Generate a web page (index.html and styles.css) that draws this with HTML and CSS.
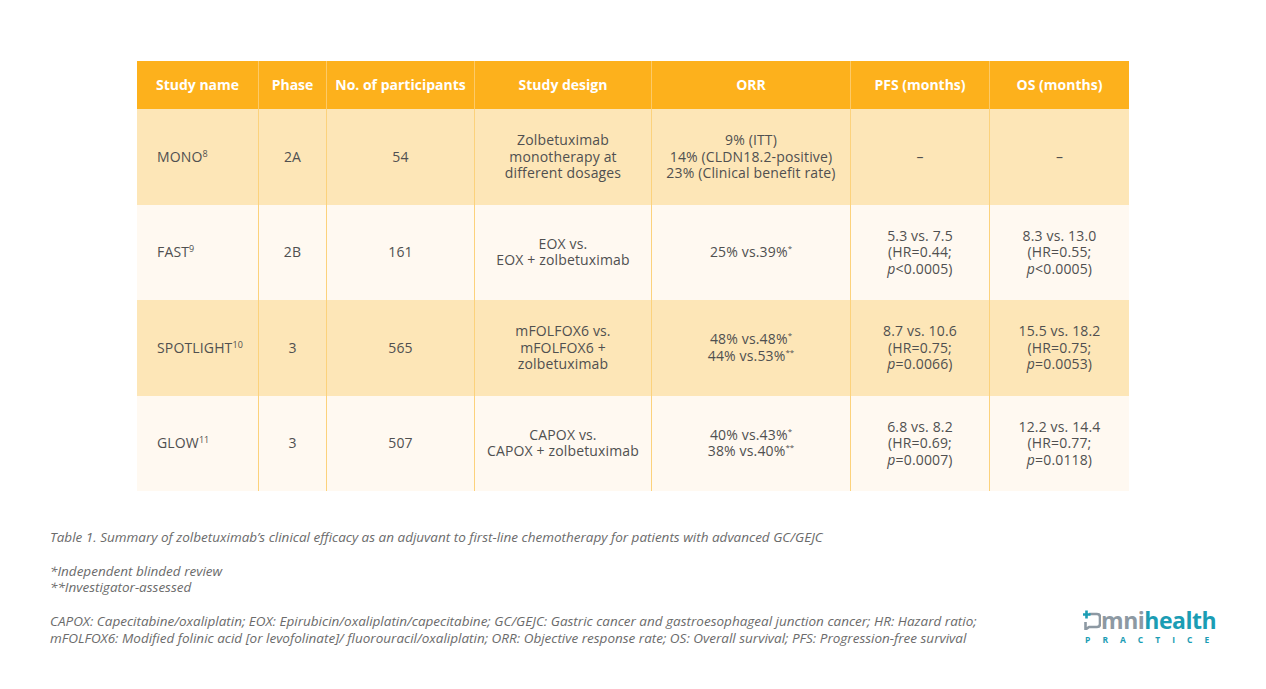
FILE: index.html
```html
<!DOCTYPE html>
<html lang="en">
<head>
<meta charset="utf-8">
<link rel="stylesheet" href="styles.css">
</head>
<body>
<div class="page">
  <table class="trials">
    <thead>
      <tr>
        <th class="c-name">Study name</th>
        <th class="c-phase">Phase</th>
        <th class="c-n">No. of participants</th>
        <th class="c-design">Study design</th>
        <th class="c-orr">ORR</th>
        <th class="c-pfs">PFS (months)</th>
        <th class="c-os">OS (months)</th>
      </tr>
    </thead>
    <tbody>
      <tr class="odd">
        <td class="name">MONO<sup>8</sup></td>
        <td>2A</td>
        <td>54</td>
        <td>Zolbetuximab<br>monotherapy at<br>different dosages</td>
        <td>9% (ITT)<br>14% (CLDN18.2-positive)<br>23% (Clinical benefit rate)</td>
        <td>–</td>
        <td>–</td>
      </tr>
      <tr class="even">
        <td class="name">FAST<sup>9</sup></td>
        <td>2B</td>
        <td>161</td>
        <td>EOX vs.<br>EOX + zolbetuximab</td>
        <td>25% vs.39%<sup class="ast">*</sup></td>
        <td>5.3 vs. 7.5<br>(HR=0.44;<br><i>p</i>&lt;0.0005)</td>
        <td>8.3 vs. 13.0<br>(HR=0.55;<br><i>p</i>&lt;0.0005)</td>
      </tr>
      <tr class="odd">
        <td class="name">SPOTLIGHT<sup>10</sup></td>
        <td>3</td>
        <td>565</td>
        <td>mFOLFOX6 vs.<br>mFOLFOX6 +<br>zolbetuximab</td>
        <td>48% vs.48%<sup class="ast">*</sup><br>44% vs.53%<sup class="ast">**</sup></td>
        <td>8.7 vs. 10.6<br>(HR=0.75;<br><i>p</i>=0.0066)</td>
        <td>15.5 vs. 18.2<br>(HR=0.75;<br><i>p</i>=0.0053)</td>
      </tr>
      <tr class="even">
        <td class="name">GLOW<sup>11</sup></td>
        <td>3</td>
        <td>507</td>
        <td>CAPOX vs.<br>CAPOX + zolbetuximab</td>
        <td>40% vs.43%<sup class="ast">*</sup><br>38% vs.40%<sup class="ast">**</sup></td>
        <td>6.8 vs. 8.2<br>(HR=0.69;<br><i>p</i>=0.0007)</td>
        <td>12.2 vs. 14.4<br>(HR=0.77;<br><i>p</i>=0.0118)</td>
      </tr>
    </tbody>
  </table>

  <div class="footer">
    <div class="notes">
      <p class="caption">Table 1. Summary of zolbetuximab’s clinical efficacy as an adjuvant to first-line chemotherapy for patients with advanced GC/GEJC</p>
      <p>*Independent blinded review<br>**Investigator-assessed</p>
      <p>CAPOX: Capecitabine/oxaliplatin; EOX: Epirubicin/oxaliplatin/capecitabine; GC/GEJC: Gastric cancer and gastroesophageal junction cancer; HR: Hazard ratio;<br>mFOLFOX6: Modified folinic acid [or levofolinate]/ fluorouracil/oxaliplatin; ORR: Objective response rate; OS: Overall survival; PFS: Progression-free survival</p>
    </div>
    <div class="logo">
      <div class="wordmark">
        <svg class="o-mark" width="18" height="20" viewBox="0 0 18 20">
          <path d="M6 4 H14 Q17 4 17 7 V14 Q17 17 14 17 H6 L2.5 19.5 V12" fill="none" stroke="#8d99a3" stroke-width="2.6" stroke-linejoin="round"/>
          <path d="M3.5 0.5 V8.5 M0 4.5 H7.5" stroke="#1b9db4" stroke-width="2.6"/>
        </svg><span class="mni">mni</span><span class="health">health</span>
      </div>
      <div class="practice">PRACTICE</div>
    </div>
  </div>
</div>
</body>
</html>
```

FILE: styles.css
```css
html, body {
  margin: 0;
  padding: 0;
  background: #ffffff;
}

.page {
  width: 1266px;
  height: 689px;
  box-sizing: border-box;
  padding: 61px 0 0 50px;
  font-family: "Open Sans", "Liberation Sans", sans-serif;
  color: #505050;
}

.trials {
  margin-left: 87px;
  width: 992px;
  border-collapse: collapse;
  table-layout: fixed;
  font-size: 14px;
  line-height: 16.5px;
  letter-spacing: 0.15px;
}

.trials th {
  background: #fdb11c;
  color: #ffffff;
  font-weight: 700;
  font-size: 14px;
  line-height: 14px;
  letter-spacing: 0;
  height: 48px;
  padding: 0;
  text-align: center;
  vertical-align: middle;
  border-left: 1px solid #fdca68;
}

.trials th:first-child,
.trials td:first-child {
  border-left: none;
}

.c-name { width: 121px; }
.c-phase { width: 67px; }
.c-n { width: 147px; }
.c-design { width: 176px; }
.c-orr { width: 198px; }
.c-pfs { width: 138px; }
.c-os { width: 139px; }

.trials td {
  height: 95.5px;
  padding: 0;
  text-align: center;
  vertical-align: middle;
  border-left: 1px solid #fcd27c;
}

.trials td.name {
  text-align: left;
  padding-left: 20px;
}

.odd td { background: #fde6b7; }
.even td { background: #fff9f1; }

.trials sup {
  font-size: 9px;
  line-height: 0;
  vertical-align: 5px;
  letter-spacing: 0;
}

.trials sup.ast {
  font-size: 8px;
  vertical-align: 6px;
}

.footer {
  display: flex;
  justify-content: space-between;
  align-items: flex-end;
  margin-top: 38px;
  width: 1166px;
}

.notes {
  font-style: italic;
  font-size: 13.5px;
  line-height: 16.8px;
  color: #6b6b6b;
  white-space: nowrap;
}

.notes p {
  margin: 0 0 16.8px 0;
}

.notes p:last-child {
  margin-bottom: 0;
}

.logo {
  display: flex;
  flex-direction: column;
  align-items: flex-start;
  margin-bottom: 3px;
}

.wordmark {
  display: flex;
  align-items: flex-end;
  font-family: "Open Sans", sans-serif;
  font-weight: 700;
  font-size: 23px;
  line-height: 20px;
  letter-spacing: -0.5px;
}

.o-mark {
  display: block;
}

.mni { color: #8d99a3; }
.health { color: #1b9db4; }

.practice {
  margin-top: 6px;
  margin-right: -12px;
  font-family: "Open Sans", sans-serif;
  font-weight: 700;
  font-size: 8.5px;
  line-height: 8px;
  letter-spacing: 12px;
  color: #1b9db4;
  padding-left: 2px;
  white-space: nowrap;
}
```
